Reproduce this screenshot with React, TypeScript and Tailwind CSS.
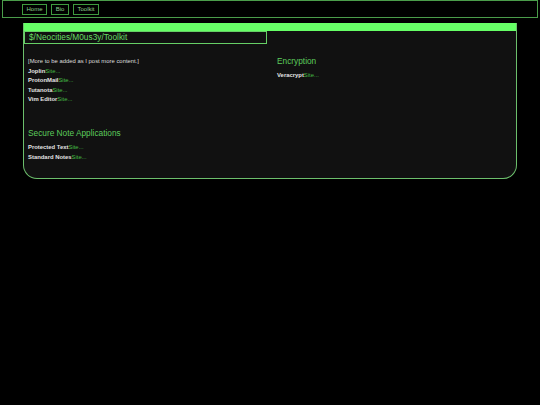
const font = "font-['Liberation_Sans',Arial,sans-serif]";

function NavButton({ label, width }: { label: string; width: string }) {
  return (
    <a className={`flex h-[11px] items-center justify-center border border-[#3f9a3f] text-[6px] text-[#8fd08f] ${width}`}>
      {label}
    </a>
  );
}

function ToolRow({ name }: { name: string }) {
  return (
    <p className="h-[9.6px] text-[5.9px] leading-[9.6px] text-[#e4e4e4]">
      <b>{name}</b>
      <span className="text-[#45bb45]">Site...</span>
    </p>
  );
}

function SectionHeading({ children }: { children: React.ReactNode }) {
  return <h2 className="text-[8.3px] leading-[12px] font-normal text-[#5ccc5c]">{children}</h2>;
}

export default function App() {
  return (
    <div className={`${font} h-[405px] w-[540px] overflow-hidden bg-black`}>
      {/* top nav */}
      <nav className="mx-[2px] flex h-[18px] items-center gap-[4px] border border-[#4a9c4a] pl-[19px]">
        <NavButton label="Home" width="w-[25px]" />
        <NavButton label="Bio" width="w-[18px]" />
        <NavButton label="Toolkit" width="w-[26px]" />
      </nav>

      {/* main panel */}
      <main className="mt-[5px] ml-[23px] h-[156px] w-[494px] rounded-br-[14px] rounded-bl-[14px] border border-t-0 border-[#6cbf6c] bg-[#111111]">
        <div className="h-[8px] bg-[#66ff66]" />
        <h1 className="h-[13px] w-[243px] border border-[#66d066] pl-[4px] text-[8.3px] leading-[11px] font-normal text-[#66dd66]">
          $/Neocities/M0us3y/Toolkit
        </h1>

        <div className="grid grid-cols-[249px_1fr] pt-[13px] pl-[4px]">
          <div>
            <p className="h-[9.6px] text-[5.9px] leading-[9.6px] text-[#dddddd]">
              [More to be added as I post more content.]
            </p>
            <ToolRow name="Joplin" />
            <ToolRow name="ProtonMail" />
            <ToolRow name="Tutanota" />
            <ToolRow name="Vim Editor" />
            <div className="mt-[22px]">
              <SectionHeading>Secure Note Applications</SectionHeading>
              <div className="mt-[4px]">
                <ToolRow name="Protected Text" />
                <ToolRow name="Standard Notes" />
              </div>
            </div>
          </div>
          <div className="-mt-[2px]">
            <SectionHeading>Encryption</SectionHeading>
            <div className="mt-[4px]">
              <ToolRow name="Veracrypt" />
            </div>
          </div>
        </div>
      </main>
    </div>
  );
}
